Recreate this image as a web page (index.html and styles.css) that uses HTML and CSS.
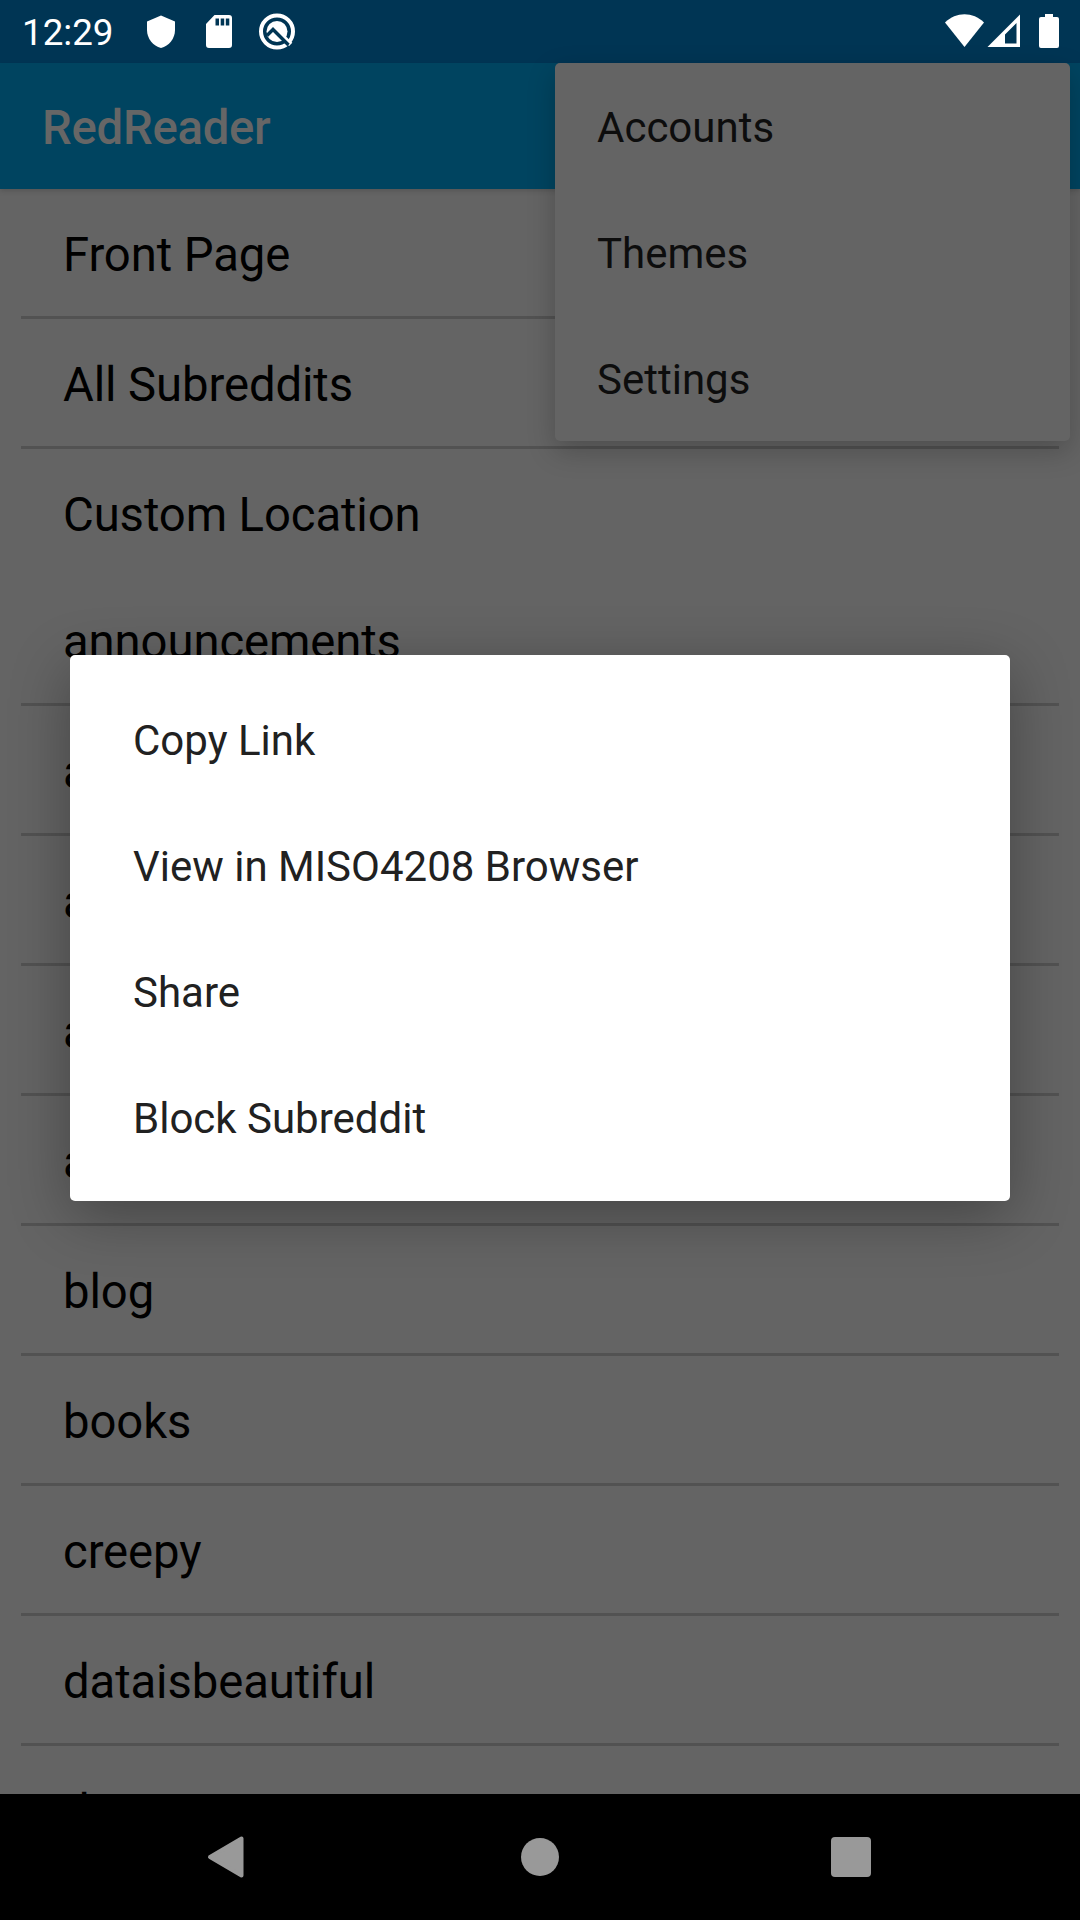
FILE: index.html
```html
<!DOCTYPE html>
<html lang="en">
<head>
<meta charset="utf-8">
<title>RedReader</title>
<link rel="stylesheet" href="styles.css">
</head>
<body>
<div class="screen">
  <header class="status">
    <span class="clock">12:29</span>
    <svg class="status-left" width="150" height="40" viewBox="145 12 150 40" fill="#fff">
      <path d="M161 15.500L175 21.500V30C175 38.500 169 46 161 48C153 46 147 38.500 147 30V21.500Z"/>
      <path fill-rule="evenodd" d="M214.500 15H229Q232 15 232 18V45Q232 48 229 48H209Q206 48 206 45V24ZM215.500 18.500V25.500H219V18.500ZM220.700 18.500V25.500H224.200V18.500ZM225.800 18.500V25.500H229.300V18.500Z"/>
      <circle cx="277" cy="31.500" r="16" fill="none" stroke="#fff" stroke-width="4"/>
      <circle cx="277" cy="31.500" r="10.500"/>
      <path d="M282 38L289.500 45.500" stroke="#fff" stroke-width="4.500" transform="translate(1.200 -1.200)"/>
      <path d="M267 35.500L273 29.500L288.500 45" fill="none" stroke="#003554" stroke-width="3.400"/>
    </svg>
    <svg class="status-right" width="120" height="40" viewBox="943 12 120 40" fill="#fff">
      <path d="M945 22.500C956 11.500 973 11.500 984 22.500L964.500 47Z"/>
      <path fill-rule="evenodd" d="M1020 14.500V47H987.500ZM1016.500 23L1005 34.500V43.500H1016.500Z"/>
      <path d="M1045 14H1053V17H1057Q1059 17 1059 19V46Q1059 48 1057 48H1041Q1039 48 1039 46V19Q1039 17 1041 17H1045Z"/>
    </svg>
  </header>
  <div class="toolbar"><h1>RedReader</h1></div>
  <main class="list">
    <ul class="group">
      <li>Front Page</li>
      <li>All Subreddits</li>
      <li>Custom Location</li>
    </ul>
    <ul class="group">
      <li>announcements</li>
      <li>art</li>
      <li>askreddit</li>
      <li>askscience</li>
      <li>aww</li>
      <li>blog</li>
      <li>books</li>
      <li>creepy</li>
      <li>dataisbeautiful</li>
      <li>documentaries</li>
    </ul>
  </main>
  <nav class="navbar">
    <svg class="back" width="40" height="44" viewBox="0 0 40 44"><path d="M4 22L35.500 3.500V40.500Z" fill="#999" stroke="#999" stroke-width="4" stroke-linejoin="round"/></svg>
    <span class="home"></span>
    <span class="recent"></span>
  </nav>
  <div class="menu"><div>Accounts</div><div>Themes</div><div>Settings</div></div>
  <div class="dialog"><div>Copy Link</div><div>View in MISO4208 Browser</div><div>Share</div><div>Block Subreddit</div></div>
</div>
</body>
</html>
```
FILE: styles.css
```css
* { box-sizing: border-box; }
body { margin: 0; background: #000; font-family: Roboto, sans-serif; }
.screen {
  position: relative;
  display: flex;
  flex-direction: column;
  width: 1080px;
  height: 1920px;
  overflow: hidden;
}
.status {
  display: flex;
  align-items: center;
  flex: none;
  height: 63px;
  padding: 1px 17px 0 22px;
  background: #003554;
  color: #fff;
}
.clock { width: 123px; padding-top: 2px; font-size: 36.75px; line-height: 60px; }
.status-right { margin-left: auto; }
.toolbar {
  z-index: 1;
  flex: none;
  height: 126px;
  padding-left: 42px;
  background: #004460;
  box-shadow: 0 2px 5px rgba(0, 0, 0, .15);
}
.toolbar h1 {
  margin: 0;
  color: #666;
  font-size: 47.25px;
  font-weight: 500;
  letter-spacing: -.25px;
  line-height: 130px;
}
.list {
  flex: none;
  height: 1605px;
  overflow: hidden;
  background: #646464;
  color: #000;
}
.group { margin: 0; padding: 0 21px; list-style: none; }
.group li {
  height: 130px;
  padding-left: 42px;
  border-bottom: 3px solid #525252;
  font-size: 47.25px;
  letter-spacing: -.1px;
  line-height: 133px;
}
.group:first-child li:last-child { height: 127px; border-bottom: 0; }
.navbar {
  display: grid;
  grid-template-columns: repeat(3, 311px);
  justify-content: center;
  align-items: center;
  justify-items: center;
  flex: none;
  height: 126px;
  background: #000;
}
.back { margin-right: 7px; }
.home { width: 38px; height: 38px; border-radius: 50%; background: #999; }
.recent { width: 40px; height: 40px; border-radius: 4px; background: #999; }
.menu, .dialog {
  position: absolute;
  z-index: 2;
  font-size: 42px;
  line-height: 130px;
}
.menu div, .dialog div { height: 126px; }
.menu {
  top: 63px;
  left: 555px;
  width: 515px;
  height: 378px;
  padding-left: 42px;
  border-radius: 5px;
  background: #646464;
  color: #0d0d0d;
  box-shadow: 0 10px 28px rgba(0, 0, 0, .22);
}
.dialog {
  top: 655px;
  left: 70px;
  width: 940px;
  height: 546px;
  padding: 21px 63px;
  border-radius: 5px;
  background: #fff;
  color: #212121;
  box-shadow: 0 14px 60px rgba(0, 0, 0, .32);
}
```
